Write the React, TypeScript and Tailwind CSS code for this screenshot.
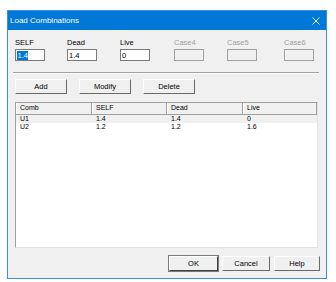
const font = { fontFamily: '"Liberation Sans", Arial, sans-serif' };

const cases = [
  { label: "SELF", value: "1.4", enabled: true, selected: true, w: "w-[52px]" },
  { label: "Dead", value: "1.4", enabled: true, selected: false, w: "w-[53px]" },
  { label: "Live", value: "0", enabled: true, selected: false, w: "w-[54px]" },
  { label: "Case4", value: "", enabled: false, selected: false, w: "w-[53px]" },
  { label: "Case5", value: "", enabled: false, selected: false, w: "w-[57px]" },
  { label: "Case6", value: "", enabled: false, selected: false, w: "w-[30px]" },
];

const rows = [
  ["U1", "1.4", "1.4", "0"],
  ["U2", "1.2", "1.2", "1.6"],
];

function Btn({ label, w, def }: { label: string; w: string; def?: boolean }) {
  return (
    <div
      className={`${w} h-[15px] flex items-center justify-center bg-[#f0f0f0] border border-t-white border-l-white ${
        def ? "border-r-[#404040] border-b-[#404040] outline outline-1 outline-[#7a7a7a]" : "border-r-[#696969] border-b-[#696969]"
      } text-[7.5px] text-black`}
    >
      {label}
    </div>
  );
}

export default function App() {
  return (
    <div className="w-[336px] h-[282px] bg-white overflow-hidden" style={font}>
      <div className="ml-[7px] mt-[10px] w-[320px] h-[269px] border border-[#3a8fdc] bg-[#f0f0f0] flex flex-col">
        <div className="h-[19px] bg-[#0078d7] flex items-center justify-between pl-[2px] pr-[6px] text-white text-[8px]">
          <span>Load Combinations</span>
          <svg width="8" height="8" viewBox="0 0 8 8">
            <path d="M0.5 0.5 L7.5 7.5 M7.5 0.5 L0.5 7.5" stroke="white" strokeWidth="0.9" />
          </svg>
        </div>

        <div className="flex-1 flex flex-col pl-[7px] pr-[6px] pt-[8px]">
          <div className="flex">
            {cases.map((c) => (
              <div key={c.label} className={`${c.w} flex flex-col`}>
                <span className={`text-[7.5px] leading-[10px] h-[11px] ${c.enabled ? "text-black" : "text-[#a0a0a0]"}`}>
                  {c.label}
                </span>
                <div
                  className={`w-[30px] h-[12px] border ${
                    c.enabled ? "bg-white border-[#7a7a7a]" : "bg-[#f0f0f0] border-[#a0a0a0]"
                  } flex items-center pl-[1px] text-[7.5px]`}
                >
                  {c.selected ? (
                    <span className="bg-[#0078d7] text-white leading-[9px] px-[0.5px]">{c.value}</span>
                  ) : (
                    <span className="leading-[9px]">{c.value}</span>
                  )}
                </div>
              </div>
            ))}
          </div>

          <div className="mt-[11px] -ml-[2px] w-[306px] h-[2px] border-t border-t-[#a0a0a0] border-b border-b-white" />

          <div className="flex gap-[12px] mt-[5px]">
            <Btn label="Add" w="w-[52px]" />
            <Btn label="Modify" w="w-[52px]" />
            <Btn label="Delete" w="w-[52px]" />
          </div>

          <div className="mt-[8px] w-[303px] h-[146px] bg-white border border-t-[#a0a0a0] border-l-[#a0a0a0] border-r-[#e3e3e3] border-b-[#e3e3e3] flex flex-col text-[7px]">
            <div className="flex h-[12px] bg-[#f0f0f0] border-b border-b-[#a0a0a0]">
              {["Comb", "SELF", "Dead", "Live"].map((h, i) => (
                <div
                  key={h}
                  className={`${
                    ["w-[76px]", "w-[75px]", "w-[76px]", "w-[74px]"][i]
                  } flex items-center pl-[3px] border-r border-r-[#a0a0a0] border-l border-l-white`}
                >
                  {h}
                </div>
              ))}
            </div>
            {rows.map((r, ri) => (
              <div key={r[0]} className={`flex h-[7.5px] leading-[7.5px] ${ri === 0 ? "bg-[#f0f0f0]" : ""}`}>
                {r.map((v, i) => (
                  <div key={i} className={`${["w-[76px]", "w-[75px]", "w-[76px]", "w-[74px]"][i]} pl-[4px]`}>
                    {v}
                  </div>
                ))}
              </div>
            ))}
          </div>

          <div className="flex justify-end gap-[4px] mt-[8px]">
            <Btn label="OK" w="w-[49px]" def />
            <Btn label="Cancel" w="w-[48px]" />
            <Btn label="Help" w="w-[46px]" />
          </div>
        </div>
      </div>
    </div>
  );
}
